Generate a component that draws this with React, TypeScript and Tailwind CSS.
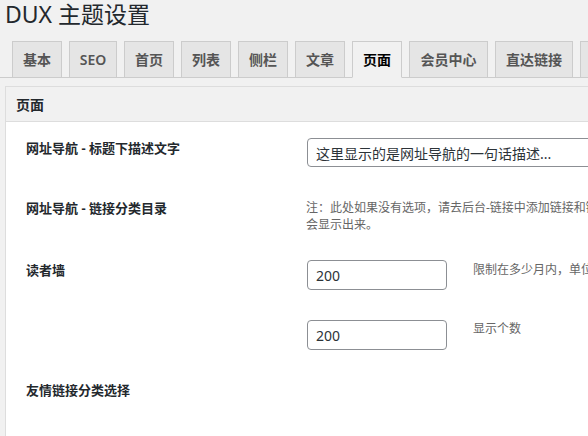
import React from "react";

const tabs = [
    { label: "基本", w: "w-[50px]" },
    { label: "SEO", w: "w-[48px]" },
    { label: "首页", w: "w-[50px]" },
    { label: "列表", w: "w-[50px]" },
    { label: "侧栏", w: "w-[50px]" },
    { label: "文章", w: "w-[50px]" },
    { label: "页面", w: "w-[50px]", active: true },
    { label: "会员中心", w: "w-[79px]" },
    { label: "直达链接", w: "w-[78px]" },
    { label: "主题样式", w: "w-[78px]" },
];

const font = "font-['Noto_Sans','Noto_Sans_CJK_SC',sans-serif]";

export default function App() {
    return (
        <div className={`w-[588px] h-[436px] overflow-hidden bg-[#f1f1f1] text-[#23282d] ${font}`}>
            <div className=" pl-[5px] text-[23px] leading-[29px] font-normal whitespace-nowrap " >DUX 主题设置</div>

            <div className=" mt-[12px] flex pl-[12px] gap-[7px] border-b border-[#ccc] w-[700px] " >
                {tabs.map((t) => (
                    <div
                        key={t.label}
                        className={`${t.w} h-[37px] -mb-px shrink-0 flex items-center justify-center border text-[14px] font-semibold whitespace-nowrap ${t.active ? "bg-[#f1f1f1] border-[#ccc] border-b-[#f1f1f1] text-black" : "bg-[#e5e5e5] border-[#ccc] text-[#555]"}`}
                    >
                        {t.label}
                    </div>
                ))}
            </div>

            <div className=" mt-[8px] ml-[5px] w-[700px] border border-[#ddd] bg-white " >
                <div className=" h-[35px] bg-[#f1f1f1] border-b border-[#ddd] flex items-center pl-[10px] text-[14px] font-bold " >页面</div>

                <div className=" pl-[20px] flex flex-col " >
                    {/* 标题下描述文字 */}
                    <div className=" h-[68px] flex " >
                        <div className=" w-[281px] shrink-0 mt-[18px] text-[13px] leading-[17px] font-bold " >网址导航 - 标题下描述文字</div>
                        <input
                            readOnly
                            value="这里显示的是网址导航的一句话描述..."
                            className=" mt-[16px] w-[350px] shrink-0 h-[29px] px-[8px] border border-[#8c8f94] rounded-[4px] text-[14px] text-[#2c3338] bg-white outline-none "
                        />
                    </div>

                    {/* 链接分类目录 */}
                    <div className=" h-[60px] flex " >
                        <div className=" w-[280px] shrink-0 mt-[10px] text-[13px] leading-[17px] font-bold " >网址导航 - 链接分类目录</div>
                        <div className=" mt-[9px] text-[12px] leading-[17px] text-[#666] whitespace-nowrap " >
                            注：此处如果没有选项，请去后台-链接中添加链接和链接分类目录，只有不为空的链接分类目录才<br />会显示出来。
                        </div>
                    </div>

                    {/* 读者墙 */}
                    <div className=" h-[60px] flex " >
                        <div className=" w-[281px] shrink-0 mt-[12px] text-[13px] leading-[17px] font-bold " >读者墙</div>
                        <input
                            readOnly
                            value="200"
                            className=" mt-[10px] w-[140px] shrink-0 h-[30px] px-[8px] border border-[#8c8f94] rounded-[4px] text-[14px] text-[#2c3338] bg-white outline-none "
                        />
                        <div className=" ml-[26px] mt-[11px] text-[12px] leading-[17px] text-[#666] whitespace-nowrap " >限制在多少月内，单位：月</div>
                    </div>

                    <div className=" h-[60px] flex " >
                        <div className=" w-[281px] shrink-0 " />
                        <input
                            readOnly
                            value="200"
                            className=" mt-[10px] w-[140px] shrink-0 h-[30px] px-[8px] border border-[#8c8f94] rounded-[4px] text-[14px] text-[#2c3338] bg-white outline-none "
                        />
                        <div className=" ml-[26px] mt-[10px] text-[12px] leading-[17px] text-[#666] whitespace-nowrap " >显示个数</div>
                    </div>

                    {/* 友情链接 */}
                    <div className=" h-[80px] flex " >
                        <div className=" w-[281px] shrink-0 mt-[12px] text-[13px] leading-[17px] font-bold " >友情链接分类选择</div>
                    </div>
                </div>
            </div>
        </div>
    )
}
